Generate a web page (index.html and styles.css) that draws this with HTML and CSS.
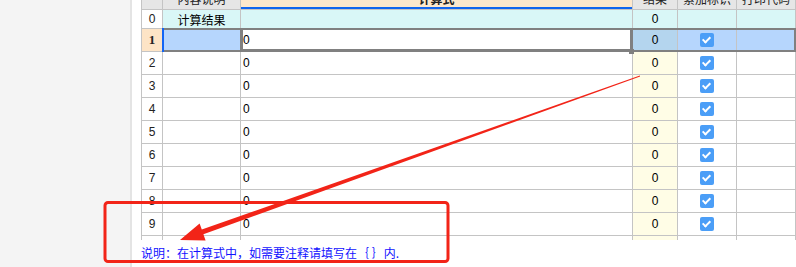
FILE: index.html
```html
<!DOCTYPE html>
<html>
<head>
<meta charset="utf-8">
<link rel="stylesheet" href="styles.css">
</head>
<body>
<div class="side"></div>
<div class="main">
  <div class="viewport">
    <div class="grid">
      <div class="hd"></div><div class="hd">内容说明</div><div class="hd hd-sel">计算式</div><div class="hd">结果</div><div class="hd">累加标识</div><div class="hd">打印代码</div>

      <div class="num">0</div><div class="cy ctr">计算结果</div><div class="cy"></div><div class="cy ctr">0</div><div class="cy"></div><div class="cy"></div>

      <div class="num num-sel">1</div><div class="sel"></div><div class="calc">0</div><div class="res-sel ctr">0</div><div class="sel ctr"><span class="chk"></span></div><div class="sel"></div>

      <div class="num">2</div><div></div><div class="calc">0</div><div class="res ctr">0</div><div class="ctr"><span class="chk"></span></div><div></div>
      <div class="num">3</div><div></div><div class="calc">0</div><div class="res ctr">0</div><div class="ctr"><span class="chk"></span></div><div></div>
      <div class="num">4</div><div></div><div class="calc">0</div><div class="res ctr">0</div><div class="ctr"><span class="chk"></span></div><div></div>
      <div class="num">5</div><div></div><div class="calc">0</div><div class="res ctr">0</div><div class="ctr"><span class="chk"></span></div><div></div>
      <div class="num">6</div><div></div><div class="calc">0</div><div class="res ctr">0</div><div class="ctr"><span class="chk"></span></div><div></div>
      <div class="num">7</div><div></div><div class="calc">0</div><div class="res ctr">0</div><div class="ctr"><span class="chk"></span></div><div></div>
      <div class="num">8</div><div></div><div class="calc">0</div><div class="res ctr">0</div><div class="ctr"><span class="chk"></span></div><div></div>
      <div class="num">9</div><div></div><div class="calc">0</div><div class="res ctr">0</div><div class="ctr"><span class="chk"></span></div><div></div>
      <div class="num"></div><div></div><div></div><div class="res"></div><div></div><div></div>
    </div>
    <div class="row-mark"></div>
    <div class="row-outline"></div>
    <div class="cell-outline"></div>
    <div class="fill-handle"></div>
  </div>
  <div class="note">说明：在计算式中，如需要注释请填写在｛ ｝内.</div>
</div>
<svg class="annot" width="796" height="267" viewBox="0 0 796 267">
  <rect x="105" y="202.5" width="343" height="59" rx="3" fill="none" stroke="#f22418" stroke-width="3"/>
  <polygon fill="#f22418" points="180,240 205.6,240.4 203.4,234.3 640.1,76.4 639.9,75.6 201.8,229.5 199.6,223.4"/>
</svg>
</body>
</html>
```
FILE: styles.css
```css
html, body {
  margin: 0;
  padding: 0;
}
body {
  width: 796px;
  height: 267px;
  overflow: hidden;
  display: flex;
  position: relative;
  background: #fff;
  font-family: "Liberation Sans", "Noto Sans CJK SC", sans-serif;
  font-size: 12px;
  color: #000;
}
.side {
  flex: none;
  width: 130px;
  background: #f4f4f4;
  border-right: 2px solid #e4e4e4;
}
.main {
  flex: 1;
  display: flex;
  flex-direction: column;
  background: #fff;
}
.viewport {
  position: relative;
  height: 240px;
  overflow: hidden;
  padding-left: 9px;
}
.grid {
  margin-top: -14px;
  display: grid;
  grid-template-columns: 20px 77px 391px 44px 58px 58px;
  grid-template-rows: 22px 18px repeat(10, 22px);
  gap: 1px;
  background: #c4c4c4;
  border: 1px solid #c4c4c4;
  width: max-content;
}
.grid > div {
  background: #fff;
  display: flex;
  align-items: center;
  overflow: hidden;
  white-space: nowrap;
}
.grid > .hd {
  background: #e6e6e6;
  justify-content: center;
  font-size: 12px;
  color: #222;
}
.grid > .hd-sel {
  background: #fde8cc;
  font-weight: bold;
  box-shadow: inset 0 -2px 0 #1166ee;
}
.grid > .num {
  justify-content: center;
  color: #222;
}
.grid > .num-sel {
  background: #fde4c6;
  font-family: "Liberation Serif", serif;
  font-weight: bold;
  font-size: 13px;
}
.ctr {
  justify-content: center;
}
.grid > .cy {
  background: #d9f7f7;
}
.grid > .sel {
  background: #b6d6fd;
}
.grid > .res-sel {
  background: #b4d5ee;
}
.grid > .res {
  background: #fffde6;
}
.calc {
  padding-left: 2px;
}
.chk {
  width: 14px;
  height: 14px;
  border-radius: 2px;
  background: #4b9ef7;
  position: relative;
}
.chk::after {
  content: "";
  position: absolute;
  left: 4px;
  top: 2px;
  width: 3px;
  height: 6px;
  border: solid #fff;
  border-width: 0 2px 2px 0;
  transform: rotate(45deg);
}
.row-mark {
  position: absolute;
  left: 30px;
  top: 28px;
  width: 2px;
  height: 24px;
  background: #1265f5;
}
.row-outline {
  position: absolute;
  left: 32px;
  top: 28px;
  width: 630px;
  height: 20px;
  border: 2px solid #808080;
  border-left: none;
}
.cell-outline {
  position: absolute;
  left: 108px;
  top: 28px;
  width: 387px;
  height: 19px;
  border: 3px solid #808080;
  border-top-width: 2px;
}
.fill-handle {
  position: absolute;
  left: 497px;
  top: 49px;
  width: 5px;
  height: 5px;
  background: #808080;
}
.note {
  padding: 4px 0 0 9px;
  color: #1212ff;
  font-size: 12px;
  font-family: "Noto Sans CJK SC", sans-serif;
}
.annot {
  position: absolute;
  left: 0;
  top: 0;
  pointer-events: none;
}
```
